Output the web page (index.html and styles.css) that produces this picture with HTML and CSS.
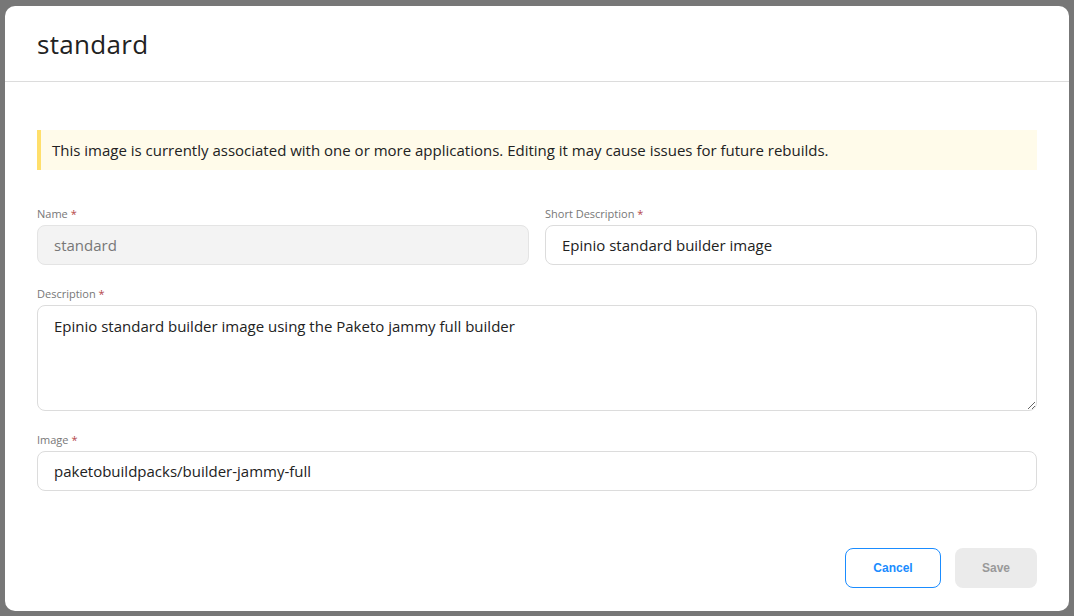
FILE: index.html
```html
<!DOCTYPE html>
<html lang="en">
  <head>
    <meta charset="UTF-8" />
    <meta name="viewport" content="width=device-width, initial-scale=1.0" />
    <title>Edit builder image</title>
    <link rel="stylesheet" href="styles.css">
  </head>
  <body>
    <div class="modal">
      <div class="modal-header">
        <h2>standard</h2>
      </div>

      <div class="modal-body">
        <div class="banner">
          This image is currently associated with one or more applications. Editing it may cause issues for future rebuilds.
        </div>

        <div class="row two">
          <div class="field">
            <label>Name <span class="req">*</span></label>
            <input type="text" class="input" value="standard" disabled />
          </div>
          <div class="field">
            <label>Short Description <span class="req">*</span></label>
            <input type="text" class="input" value="Epinio standard builder image" />
          </div>
        </div>

        <div class="row">
          <div class="field">
            <label>Description <span class="req">*</span></label>
            <textarea class="input area">Epinio standard builder image using the Paketo jammy full builder</textarea>
          </div>
        </div>

        <div class="row">
          <div class="field">
            <label>Image <span class="req">*</span></label>
            <input type="text" class="input" value="paketobuildpacks/builder-jammy-full" />
          </div>
        </div>
      </div>

      <div class="modal-footer">
        <button class="btn btn-outline">Cancel</button>
        <button class="btn btn-disabled" disabled>Save</button>
      </div>
    </div>
  </body>
</html>
```

FILE: styles.css
```css
html {
  background: #777;
}
body {
  margin: 0;
  padding: 6px 5px;
  font-family: "Open Sans", sans-serif;
  color: #222;
}
.modal {
  width: 1064px;
  height: 605px;
  background: white;
  border-radius: 10px;
  display: flex;
  flex-direction: column;
}
.modal-header {
  height: 75px;
  padding: 0 32px;
  display: flex;
  align-items: center;
  border-bottom: 1px solid #dcdcdc;
}
.modal-header h2 {
  margin: 0;
  font-size: 26px;
  font-weight: 400;
  letter-spacing: 0.3px;
}
.modal-body {
  padding: 48px 32px 0;
}
.banner {
  height: 40px;
  display: flex;
  align-items: center;
  padding-left: 11px;
  border-left: 4px solid #ffdf6b;
  background: #fffbea;
  font-size: 15px;
  margin-bottom: 37px;
}
.row {
  margin-bottom: 22px;
}
.row.two {
  display: grid;
  grid-template-columns: 1fr 1fr;
  gap: 16px;
}
.field label {
  display: block;
  font-size: 11px;
  line-height: 14px;
  color: #777;
  margin-bottom: 4px;
}
.req {
  color: #b5474b;
}
.input {
  display: block;
  box-sizing: border-box;
  width: 100%;
  height: 40px;
  padding: 0 16px;
  border: 1px solid #dcdcdc;
  border-radius: 8px;
  font-family: "Open Sans", sans-serif;
  font-size: 15px;
  color: #222;
  background: white;
  outline: none;
}
.input:disabled {
  background: #f3f3f3;
  border-color: #e4e4e4;
  color: #777;
}
.area {
  height: 106px;
  padding-top: 10px;
  resize: vertical;
}
.modal-footer {
  margin-top: auto;
  padding: 0 32px 23px;
  display: flex;
  justify-content: flex-end;
  gap: 14px;
}
.btn {
  height: 40px;
  border-radius: 8px;
  font-family: "Liberation Sans", Arial, sans-serif;
  font-size: 12px;
  font-weight: bold;
}
.btn-outline {
  width: 96px;
  background: white;
  border: 1px solid #1a8cff;
  color: #1a8cff;
}
.btn-disabled {
  width: 82px;
  background: #ebebeb;
  border: none;
  color: #999;
}
```
